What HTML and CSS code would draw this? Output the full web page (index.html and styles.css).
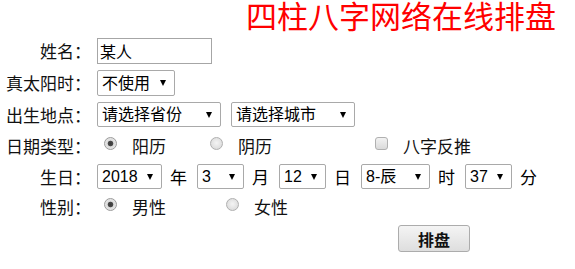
FILE: index.html
```html
<!DOCTYPE html>
<html lang="zh-CN">
<head>
<meta charset="utf-8">
<title>四柱八字网络在线排盘</title>
<link rel="stylesheet" href="styles.css">
</head>
<body>
<h1 class="title">四柱八字网络在线排盘</h1>
<form class="form">
  <div class="row h26">
    <label class="lbl">姓名：</label>
    <div class="field"><input class="name" type="text" value="某人"></div>
  </div>
  <div class="row h26">
    <label class="lbl">真太阳时：</label>
    <div class="field">
      <span class="sel"><select class="w-sun tall"><option>不使用</option><option>使用</option></select></span>
    </div>
  </div>
  <div class="row h25">
    <label class="lbl">出生地点：</label>
    <div class="field">
      <span class="sel"><select class="w-prov"><option>请选择省份</option></select></span>
      <span class="sel sp10"><select class="w-city"><option>请选择城市</option></select></span>
    </div>
  </div>
  <div class="row h25">
    <label class="lbl">日期类型：</label>
    <div class="field opts">
      <label class="opt"><input type="radio" name="dt" checked><span class="otext">阳历</span></label>
      <label class="opt opt-lunar"><input type="radio" name="dt"><span class="otext">阴历</span></label>
      <label class="opt opt-reverse"><input type="checkbox" class="chk"><span class="otext">八字反推</span></label>
    </div>
  </div>
  <div class="row h25">
    <label class="lbl">生日：</label>
    <div class="field">
      <span class="sel"><select class="w-year"><option>2018</option></select></span><span class="unit">年</span>
      <span class="sel"><select class="w-mon"><option>3</option></select></span><span class="unit">月</span>
      <span class="sel"><select class="w-day"><option>12</option></select></span><span class="unit">日</span>
      <span class="sel"><select class="w-hour"><option>8-辰</option></select></span><span class="unit">时</span>
      <span class="sel"><select class="w-min"><option>37</option></select></span><span class="unit">分</span>
    </div>
  </div>
  <div class="row h24">
    <label class="lbl">性别：</label>
    <div class="field opts">
      <label class="opt"><input type="radio" name="sex" checked><span class="otext">男性</span></label>
      <label class="opt opt-female"><input type="radio" name="sex"><span class="otext">女性</span></label>
    </div>
  </div>
  <div class="row h27 btn-row">
    <button type="button" class="btn">排盘</button>
  </div>
</form>
</body>
</html>
```
FILE: styles.css
```css
html, body {
  margin: 0;
  padding: 0;
  background: #fff;
}
body {
  font-family: "Noto Sans CJK SC", "Liberation Sans", sans-serif;
  color: #000;
  width: 575px;
  height: 269px;
  overflow: hidden;
}
.title {
  margin: 0;
  height: 36px;
  line-height: 36px;
  font-size: 31px;
  font-weight: normal;
  color: #ff0000;
  text-align: right;
  padding-right: 19px;
  font-family: "Liberation Serif", "Noto Sans CJK SC", serif;
}
.form {
  margin: 2px 0 0 0;
  display: flex;
  flex-direction: column;
  gap: 6px;
}
.row {
  display: flex;
  align-items: center;
}
.h24 { height: 24px; }
.h25 { height: 25px; }
.h26 { height: 26px; }
.h27 { height: 27px; }
.lbl {
  width: 91px;
  flex-shrink: 0;
  text-align: right;
  font-size: 17px;
  line-height: 24px;
  color: #111;
}
.field {
  margin-left: 6px;
  display: flex;
  align-items: center;
  height: 100%;
}
.name {
  box-sizing: border-box;
  width: 115px;
  height: 26px;
  margin: 0;
  padding: 0 2px;
  border: 1px solid #a6a6a6;
  font-family: "Noto Sans CJK SC", sans-serif;
  font-size: 16px;
  color: #000;
  outline: none;
}
.sel {
  position: relative;
  display: inline-flex;
}
.sel::after {
  content: "";
  position: absolute;
  right: 9px;
  top: 50%;
  margin-top: -3px;
  border-left: 3.5px solid transparent;
  border-right: 3.5px solid transparent;
  border-top: 6px solid #000;
  pointer-events: none;
}
.sp10 { margin-left: 10px; }
.sel select {
  -webkit-appearance: none;
  appearance: none;
  box-sizing: border-box;
  height: 25px;
  margin: 0;
  padding: 0 0 0 4px;
  border: 1px solid #a9a9a9;
  border-radius: 2px;
  background: #fff;
  color: #000;
  font-family: "Liberation Sans", "Noto Sans CJK SC", sans-serif;
  font-size: 16px;
  line-height: 23px;
  outline: none;
}
.sel select.tall { height: 26px; }
.w-sun { width: 78px; }
.w-prov { width: 124px; }
.w-city { width: 124px; }
.w-year { width: 65px; }
.w-mon { width: 47px; }
.w-day { width: 47px; }
.w-hour { width: 69px; }
.w-min { width: 47px; }
.unit {
  font-size: 17px;
  line-height: 24px;
  margin: 0 10px 0 8px;
  width: 17px;
  white-space: nowrap;
}
.opts {
  padding-left: 7px;
}
.opt {
  display: inline-flex;
  align-items: center;
}
.opt-lunar { margin-left: 44px; }
.opt-reverse { margin-left: 103px; }
.opt-female { margin-left: 60px; }
.otext {
  font-size: 17px;
  line-height: 24px;
  margin-left: 15px;
  color: #111;
}
.opt input {
  -webkit-appearance: none;
  appearance: none;
  box-sizing: border-box;
  width: 13px;
  height: 13px;
  margin: 0 0 5px 0;
  border: 1px solid #b0b0b0;
  border-radius: 50%;
  background: radial-gradient(circle at 50% 45%, #f4f4f4 0, #dedede 70%, #d2d2d2 100%);
}
.opt input:checked {
  background: radial-gradient(circle, #3a3a3a 0, #4a4a4a 2.4px, #dcdcdc 3.2px, #eeeeee 100%);
  border-color: #9c9c9c;
}
.opt input.chk {
  border-radius: 3px;
  background: linear-gradient(#f2f2f2, #dadada);
  border-color: #b0b0b0;
}
.btn-row {
  padding-left: 398px;
}
.btn {
  box-sizing: border-box;
  width: 72px;
  height: 27px;
  margin: 0;
  padding: 0;
  border: 1px solid #acacac;
  border-radius: 3px;
  background: linear-gradient(#f4f4f4, #dedede);
  font-family: "Noto Sans CJK SC", sans-serif;
  font-size: 16px;
  font-weight: bold;
  color: #111;
}
```
